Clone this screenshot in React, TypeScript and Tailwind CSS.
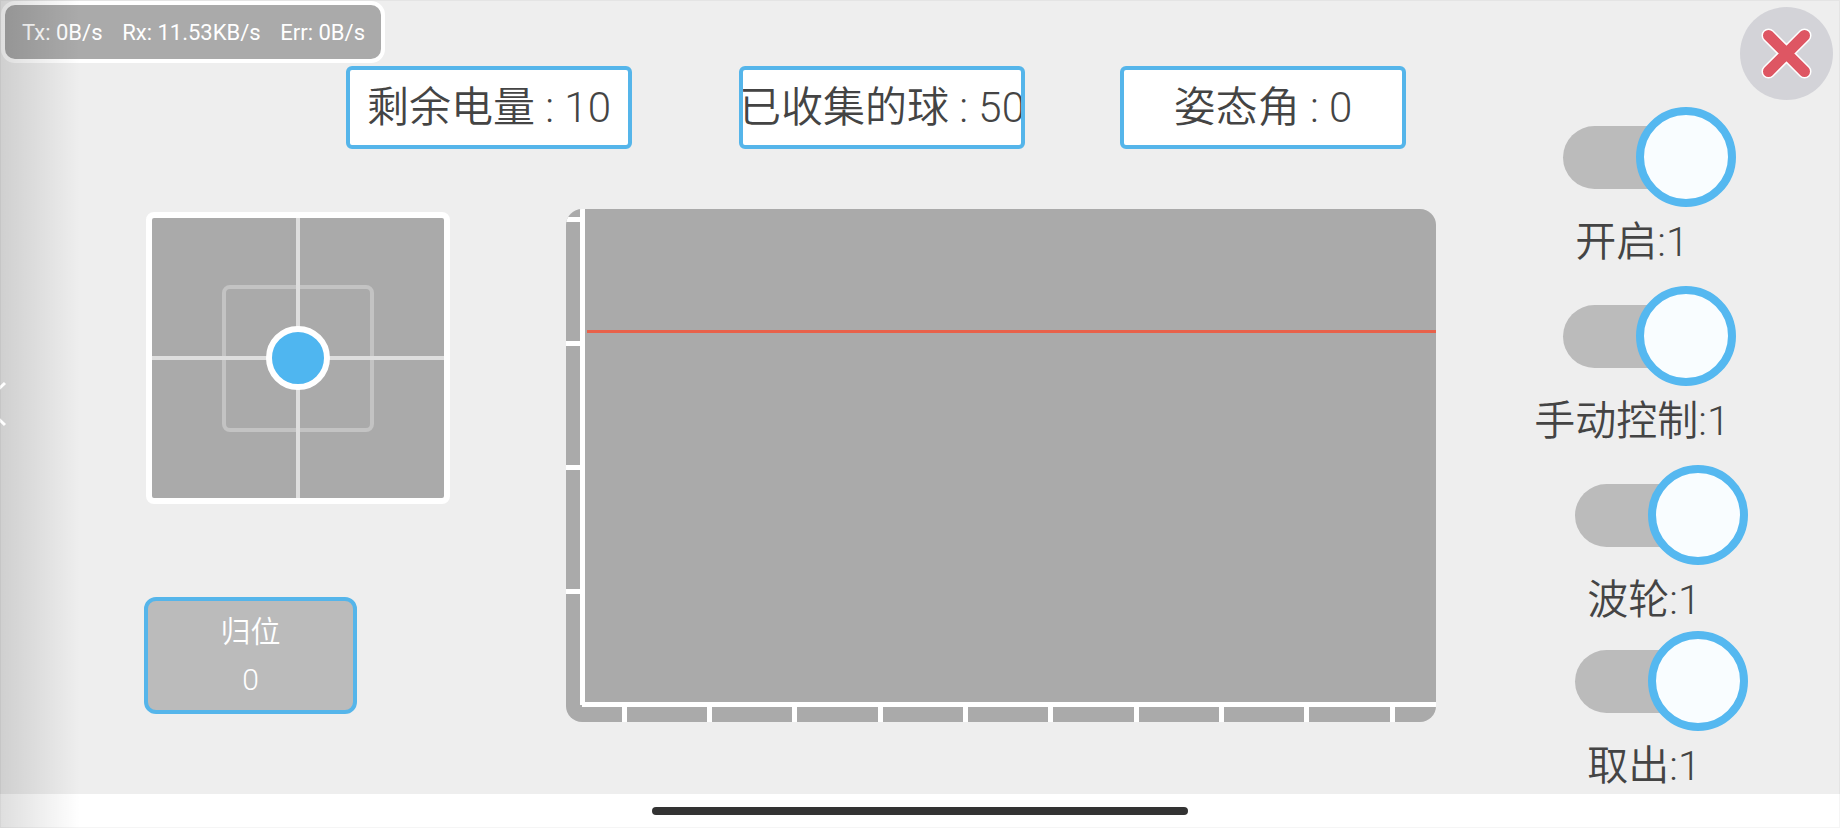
import React, { useState } from 'react';

interface ReadoutProps {
  label: string;
  value: number;
  className?: string;
}

interface ToggleItem {
  id: string;
  label: string;
}

const X_TICKS = [56, 141, 226, 312, 397, 482, 568, 653, 738, 824];
const Y_TICKS = [8, 132, 256, 380];

const UPPER_TOGGLES: ToggleItem[] = [
  { id: 'power', label: '开启' },
  { id: 'manual', label: '手动控制' },
];

const LOWER_TOGGLES: ToggleItem[] = [
  { id: 'wheel', label: '波轮' },
  { id: 'eject', label: '取出' },
];

const Readout: React.FC<ReadoutProps> = ({ label, value, className = '' }) => (
  <output
    className={`flex h-[83px] w-[286px] shrink-0 items-center justify-center overflow-hidden whitespace-nowrap rounded-md border-4 border-[#55b5ea] bg-white text-[42px] leading-none ${className}`}
  >
    <span className="shrink-0 whitespace-pre">{`${label} : ${value}`}</span>
  </output>
);

const Toggle: React.FC<{ item: ToggleItem }> = ({ item }) => {
  const [on, setOn] = useState(true);

  return (
    <label htmlFor={item.id} className="relative flex flex-col items-center">
      <input
        id={item.id}
        type="checkbox"
        role="switch"
        className="sr-only"
        checked={on}
        onChange={() => setOn(!on)}
      />
      <span className="flex h-[100px] items-center">
        <span
          className={`flex h-[63px] w-[138px] items-center rounded-full bg-[#bbbbbb] ${on ? 'justify-end' : 'justify-start'}`}
        >
          <span
            className={`size-[100px] shrink-0 rounded-full border-8 border-[#55b8f0] bg-[#f9fdff] ${on ? '-mr-[35px]' : '-ml-[35px]'}`}
          />
        </span>
      </span>
      <span className="pt-2 text-[41px] leading-[54px]">{`${item.label}:${on ? 1 : 0}`}</span>
    </label>
  );
};

const Joystick = () => (
  <div className="h-[292px] w-[304px] rounded-lg border-6 border-white bg-[#aaaaaa]">
    <svg viewBox="0 0 292 280" className="block size-full">
      <rect x="72" y="69" width="148" height="143" rx="6" fill="none" stroke="#c3c3c3" strokeWidth="4" />
      <path d="M146 0V280M0 140H292" stroke="#dedede" strokeWidth="4" />
      <circle cx="146" cy="140" r="29" fill="#4fb6f0" stroke="#ffffff" strokeWidth="6" />
    </svg>
  </div>
);

const Chart = () => (
  <div className="h-[513px] min-w-0 flex-1 overflow-hidden rounded-2xl bg-[#aaaaaa]">
    <svg viewBox="0 0 870 513" preserveAspectRatio="none" className="block size-full">
      {/* Axes */}
      <path d="M14 0H19V493H870V498H16V496H14Z" fill="#ffffff" />
      {Y_TICKS.map((y) => (
        <rect key={y} x="0" y={y} width="14" height="5" fill="#ffffff" />
      ))}
      {X_TICKS.map((x) => (
        <rect key={x} x={x} y="498" width="5" height="15" fill="#ffffff" />
      ))}
      <path d="M21 122.5H870" stroke="#e8614a" strokeWidth="3" />
    </svg>
  </div>
);

const CloseButton = () => (
  <button type="button" aria-label="关闭" className="mr-[7px] self-end rounded-full">
    <svg viewBox="0 0 93 93" className="block size-[93px]">
      <circle cx="46.5" cy="46.5" r="46.5" fill="#d3d3d8" />
      <path d="M28.5 28.5L64.5 64.5M64.5 28.5L28.5 64.5" stroke="#ffffff" strokeWidth="14" strokeLinecap="round" />
      <path d="M28.5 28.5L64.5 64.5M64.5 28.5L28.5 64.5" stroke="#de5663" strokeWidth="11" strokeLinecap="round" />
    </svg>
  </button>
);

export default function App() {
  return (
    <div className="relative flex min-h-screen flex-col overflow-hidden bg-[#eeeeee] font-['Roboto','Noto_Sans_CJK_SC',sans-serif] font-[350] text-[#444444]">
      <main className="flex flex-1">
        <div className="flex min-w-0 flex-1 flex-col">
          {/* Link statistics */}
          <div className="mt-px ml-px flex h-[62px] w-[384px] items-center justify-between rounded-[14px] border-4 border-white bg-[#aaaaaa] pr-4 pl-[17px] text-[22px] font-normal text-white">
            <span>Tx: 0B/s</span>
            <span>Rx: 11.53KB/s</span>
            <span>Err: 0B/s</span>
          </div>

          <div className="mt-[3px] flex pr-[30px] pl-[346px]">
            <Readout label="剩余电量" value={10} />
            <Readout label="已收集的球" value={50} className="ml-[107px]" />
            <Readout label="姿态角" value={0} className="ml-auto" />
          </div>

          <div className="mt-[60px] flex">
            <div className="flex w-[566px] shrink-0 flex-col items-start pt-[3px] pl-36">
              <div className="ml-[2px]">
                <Joystick />
              </div>
              <button
                type="button"
                className="mt-[93px] flex h-[117px] w-[213px] flex-col items-center justify-center rounded-xl border-4 border-[#55b5ea] bg-[#bbbbbb] text-[30px] leading-[48px] text-white"
              >
                <span>归位</span>
                <span>0</span>
              </button>
            </div>
            <Chart />
          </div>
        </div>

        <aside className="flex w-[404px] shrink-0 flex-col pt-[7px]">
          <CloseButton />
          <div className="mt-[7px] flex w-[392px] flex-col gap-[17px]">
            {UPPER_TOGGLES.map((item) => (
              <Toggle key={item.id} item={item} />
            ))}
          </div>
          <div className="mt-[17px] ml-3 flex w-[392px] flex-col gap-1">
            {LOWER_TOGGLES.map((item) => (
              <Toggle key={item.id} item={item} />
            ))}
          </div>
        </aside>
      </main>

      {/* System navigation bar */}
      <footer className="flex h-[34px] items-center justify-center bg-white">
        <div className="h-2 w-[536px] rounded-full bg-[#333333]" />
      </footer>

      {/* Edge swipe shade with the back arrow */}
      <div className="pointer-events-none absolute inset-y-0 left-0 flex w-20 items-center bg-linear-to-r from-black/13 to-transparent">
        <svg viewBox="0 0 8 48" className="-mt-5 h-12 w-2">
          <path d="M5 3L-17 24L5 45" fill="none" stroke="#ffffff" strokeWidth="3" />
        </svg>
      </div>
      <div className="pointer-events-none absolute inset-0 border border-black/4" />
    </div>
  );
}
